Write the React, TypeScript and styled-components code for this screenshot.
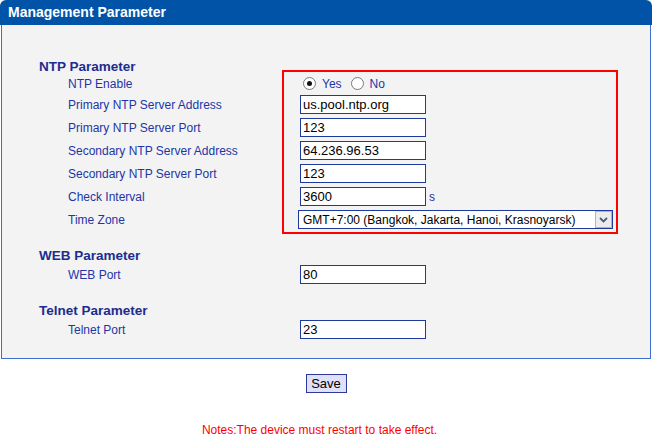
import { useState } from 'react';
import styled, { createGlobalStyle } from 'styled-components';

const GlobalStyle = createGlobalStyle`
  body {
    margin: 0;
    background: #ffffff;
    font-family: "Liberation Sans", Arial, sans-serif;
  }
`;

type Field = { key: string; label: string; value: string; unit?: string };

const ntpFields: Field[] = [
  { key: 'addr1', label: 'Primary NTP Server Address', value: 'us.pool.ntp.org' },
  { key: 'port1', label: 'Primary NTP Server Port', value: '123' },
  { key: 'addr2', label: 'Secondary NTP Server Address', value: '64.236.96.53' },
  { key: 'port2', label: 'Secondary NTP Server Port', value: '123' },
  { key: 'interval', label: 'Check Interval', value: '3600', unit: 's' },
];

function App() {
  const [ntpEnabled, setNtpEnabled] = useState(true);

  return (
    <Page>
      <GlobalStyle />
      <TitleBar>Management Parameter</TitleBar>
      <Panel>
        <Section>
          <LabelColumn>
            <SectionTitle>NTP Parameter</SectionTitle>
            <LabelRow $height={19}>NTP Enable</LabelRow>
            {ntpFields.map((f) => (
              <LabelRow key={f.key} $height={23}>
                {f.label}
              </LabelRow>
            ))}
            <LabelRow $height={23}>Time Zone</LabelRow>
          </LabelColumn>
          <ControlColumn $highlight>
            <ControlRow $height={19}>
              <RadioOption onClick={() => setNtpEnabled(true)}>
                <Radio $checked={ntpEnabled} />
                Yes
              </RadioOption>
              <RadioOption onClick={() => setNtpEnabled(false)}>
                <Radio $checked={!ntpEnabled} />
                No
              </RadioOption>
            </ControlRow>
            {ntpFields.map((f) => (
              <ControlRow key={f.key} $height={23}>
                <TextInput defaultValue={f.value} />
                {f.unit && <Unit>{f.unit}</Unit>}
              </ControlRow>
            ))}
            <ControlRow $height={23}>
              <SelectBox>
                <SelectField defaultValue="7">
                  <option value="7">GMT+7:00 (Bangkok, Jakarta, Hanoi, Krasnoyarsk)</option>
                </SelectField>
                <SelectArrow>
                  <svg width="9" height="6" viewBox="0 0 9 6">
                    <polyline
                      points="1,1 4.5,4.5 8,1"
                      fill="none"
                      stroke="#4d5d78"
                      strokeWidth="1.8"
                    />
                  </svg>
                </SelectArrow>
              </SelectBox>
            </ControlRow>
          </ControlColumn>
        </Section>

        <Section>
          <LabelColumn>
            <SectionTitle>WEB Parameter</SectionTitle>
            <LabelRow $height={23}>WEB Port</LabelRow>
          </LabelColumn>
          <ControlColumn>
            <ControlRow $height={23}>
              <TextInput defaultValue="80" />
            </ControlRow>
          </ControlColumn>
        </Section>

        <Section>
          <LabelColumn>
            <SectionTitle>Telnet Parameter</SectionTitle>
            <LabelRow $height={23}>Telnet Port</LabelRow>
          </LabelColumn>
          <ControlColumn>
            <ControlRow $height={23}>
              <TextInput defaultValue="23" />
            </ControlRow>
          </ControlColumn>
        </Section>
      </Panel>
      <SaveButton>Save</SaveButton>
      <Notes>Notes:The device must restart to take effect.</Notes>
    </Page>
  );
}

export default App;

const Page = styled.div`
  width: 650px;
  margin-left: 1px;
`;

const TitleBar = styled.div`
  height: 25px;
  line-height: 25px;
  margin-left: -1px;
  margin-right: -1px;
  padding-left: 8px;
  background: #0053a6;
  border-radius: 6px 6px 0 0;
  color: #ffffff;
  font-size: 14px;
  font-weight: bold;
`;

const Panel = styled.div`
  display: flex;
  flex-direction: column;
  gap: 17px;
  padding: 34px 0 17px 37px;
  background: #f3f3f3;
  border: 1px solid #3c6fd1;
  border-top: none;
`;

const Section = styled.div`
  display: flex;
  align-items: flex-start;
`;

const LabelColumn = styled.div`
  width: 243px;
  display: flex;
  flex-direction: column;
`;

const SectionTitle = styled.div`
  height: 15px;
  line-height: 15px;
  color: #1b2d8f;
  font-size: 13.5px;
  font-weight: bold;
`;

const LabelRow = styled.div<{ $height: number }>`
  height: ${(p) => p.$height}px;
  display: flex;
  align-items: center;
  padding-left: 29px;
  color: #2335a6;
  font-size: 12px;
`;

const ControlColumn = styled.div<{ $highlight?: boolean }>`
  display: flex;
  flex-direction: column;
  box-sizing: border-box;
  margin-top: ${(p) => (p.$highlight ? 11 : 15)}px;
  margin-bottom: ${(p) => (p.$highlight ? -4 : 0)}px;
  width: ${(p) => (p.$highlight ? '336px' : 'auto')};
  padding: ${(p) => (p.$highlight ? '2px 0 1px 16px' : '0 0 0 18px')};
  border: ${(p) => (p.$highlight ? '2px solid #ff0000' : 'none')};
`;

const ControlRow = styled.div<{ $height: number }>`
  height: ${(p) => p.$height}px;
  display: flex;
  align-items: center;
  gap: 3px;
`;

const RadioOption = styled.label`
  display: flex;
  align-items: center;
  gap: 6px;
  margin-left: 3px;
  margin-right: 3px;
  color: #2335a6;
  font-size: 12px;
  cursor: pointer;
`;

const Radio = styled.span<{ $checked: boolean }>`
  width: 13px;
  height: 13px;
  box-sizing: border-box;
  border: 1px solid #7a7a7a;
  border-radius: 50%;
  background: #ffffff;
  display: flex;
  align-items: center;
  justify-content: center;

  &::after {
    content: '';
    width: 5px;
    height: 5px;
    border-radius: 50%;
    background: ${(p) => (p.$checked ? '#111111' : 'transparent')};
  }
`;

const TextInput = styled.input`
  width: 126px;
  height: 19px;
  box-sizing: border-box;
  margin: 0;
  padding: 0 2px;
  border: 1px solid #1f3a9f;
  background: #ffffff;
  color: #000000;
  font-family: "Liberation Sans", Arial, sans-serif;
  font-size: 13px;
  outline: none;
`;

const Unit = styled.span`
  color: #2335a6;
  font-size: 12px;
`;

const SelectBox = styled.div`
  display: flex;
  width: 315px;
  height: 19px;
  box-sizing: border-box;
  margin-left: -2px;
  border: 1px solid #1f3a9f;
  background: #ffffff;
`;

const SelectField = styled.select`
  flex: 1;
  min-width: 0;
  appearance: none;
  border: none;
  background: transparent;
  margin: 0;
  padding: 0 0 0 4px;
  color: #000000;
  font-family: "Liberation Sans", Arial, sans-serif;
  font-size: 12px;
  outline: none;
`;

const SelectArrow = styled.div`
  width: 17px;
  box-sizing: border-box;
  display: flex;
  align-items: center;
  justify-content: center;
  background: #ececec;
  border: 1px solid #b4b4b4;
`;

const SaveButton = styled.button`
  display: block;
  width: 41px;
  height: 19px;
  margin: 15px auto 0;
  padding: 0;
  border: 1px solid #2b3a9a;
  background: #e0e0f8;
  color: #000000;
  font-family: "Liberation Sans", Arial, sans-serif;
  font-size: 13px;
`;

const Notes = styled.div`
  margin-top: 30px;
  padding-right: 13px;
  text-align: center;
  line-height: 14px;
  color: #ff0000;
  font-size: 12px;
`;
